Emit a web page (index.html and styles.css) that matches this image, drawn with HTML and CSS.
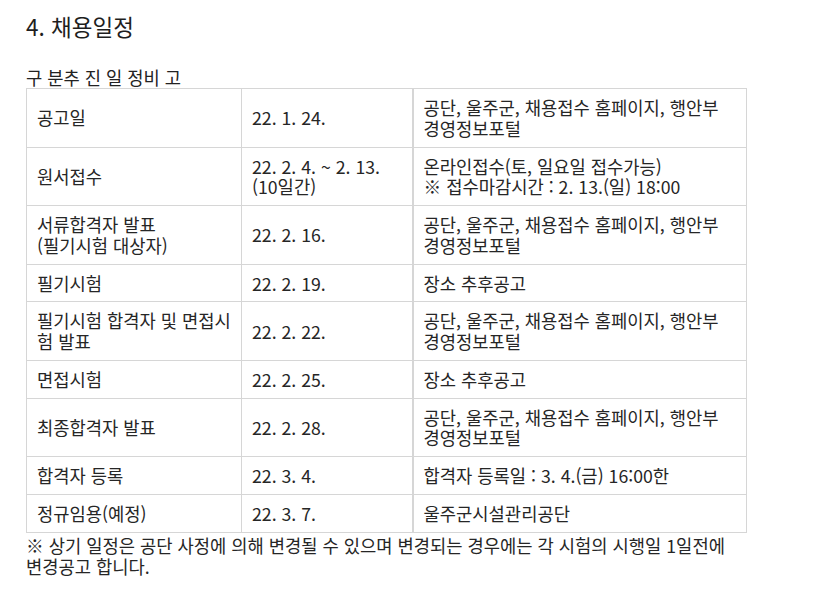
FILE: index.html
```html
<!DOCTYPE html>
<html lang="ko">
<head>
<meta charset="utf-8">
<link rel="stylesheet" href="styles.css">
</head>
<body>
<div class="page">
  <h2 class="title">4. 채용일정</h2>
  <div class="caption">구 분추 진 일 정비 고</div>
  <table class="sched">
    <colgroup><col class="c1"><col class="c2"><col class="c3"></colgroup>
    <tr><td>공고일</td><td>22. 1. 24.</td><td>공단, 울주군, 채용접수 홈페이지, 행안부<br>경영정보포털</td></tr>
    <tr><td>원서접수</td><td>22. 2. 4. ~ 2. 13.<br>(10일간)</td><td>온라인접수(토, 일요일 접수가능)<br>※ 접수마감시간 : 2. 13.(일) 18:00</td></tr>
    <tr><td>서류합격자 발표<br>(필기시험 대상자)</td><td>22. 2. 16.</td><td>공단, 울주군, 채용접수 홈페이지, 행안부<br>경영정보포털</td></tr>
    <tr><td>필기시험</td><td>22. 2. 19.</td><td>장소 추후공고</td></tr>
    <tr><td>필기시험 합격자 및 면접시<br>험 발표</td><td>22. 2. 22.</td><td>공단, 울주군, 채용접수 홈페이지, 행안부<br>경영정보포털</td></tr>
    <tr><td>면접시험</td><td>22. 2. 25.</td><td>장소 추후공고</td></tr>
    <tr><td>최종합격자 발표</td><td>22. 2. 28.</td><td>공단, 울주군, 채용접수 홈페이지, 행안부<br>경영정보포털</td></tr>
    <tr><td>합격자 등록</td><td>22. 3. 4.</td><td>합격자 등록일 : 3. 4.(금) 16:00한</td></tr>
    <tr><td>정규임용(예정)</td><td>22. 3. 7.</td><td>울주군시설관리공단</td></tr>
  </table>
  <p class="note"><span class="nl">※ 상기 일정은 공단 사정에 의해 변경될 수 있으며 변경되는 경우에는 각 시험의 시행일 1일전에</span><br>변경공고 합니다.</p>
</div>
</body>
</html>
```

FILE: styles.css
```css
html, body {
  margin: 0;
  padding: 0;
  background: #ffffff;
}
body {
  font-family: "Noto Sans CJK KR", "Noto Sans", sans-serif;
  color: #222222;
  font-size: 17.7px;
}
.page {
  width: 720px;
  padding-left: 26px;
}
.title {
  margin: 11px 0 0 0;
  font-size: 22.5px;
  line-height: 30px;
  font-weight: 400;
  color: #1e1e1e;
}
.caption {
  margin-top: 26px;
  font-size: 17.7px;
  line-height: 20px;
  height: 21px;
}
.sched {
  border-collapse: collapse;
  width: 720px;
  table-layout: fixed;
}
.c1 { width: 215px; }
.c2 { width: 171px; }
.c3 { width: 334px; }
.sched td {
  border: 1px solid #d6d6d6;
  padding: 8px 10px;
  line-height: 20.75px;
  font-size: 17.7px;
  vertical-align: middle;
  color: #262626;
}
.sched td:nth-child(3) {
  border-left: 2px solid #d6d6d6;
}
.note {
  margin: 2px 0 0 0;
  font-size: 17.7px;
  line-height: 21px;
  color: #262626;
  width: 760px;
}
.nl {
  white-space: nowrap;
}
```
